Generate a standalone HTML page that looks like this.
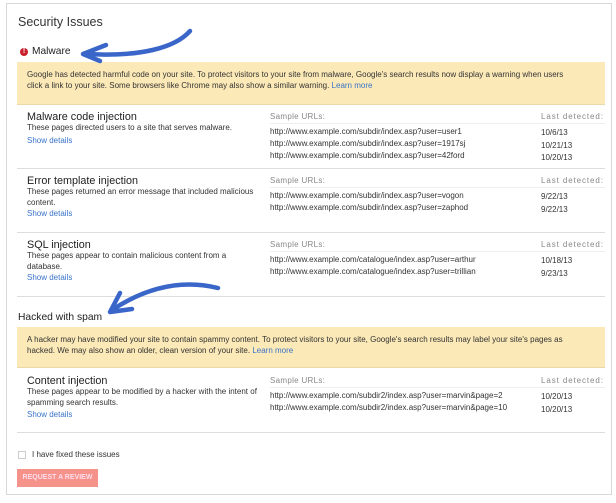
<!DOCTYPE html>
<html><head><meta charset="utf-8"><style>
*{margin:0;padding:0;box-sizing:border-box}
body{width:616px;height:503px;background:#fff;font-family:"Liberation Sans",Arial,sans-serif;color:#222;position:relative;overflow:hidden}
.a{position:absolute;white-space:nowrap}
.frame{position:absolute;left:6px;top:3px;width:606px;height:492px;border:1px solid #d8d8d8}
.yel{position:absolute;left:17px;width:588px;background:#fbe9b7;border-bottom:1px solid #e9d9a8}
.s{font-size:8px;line-height:10.5px;color:#333}
.h{font-size:10.8px;color:#222}
.l{font-size:8px;color:#3a73c8}
.g{font-size:8px;color:#888;letter-spacing:.3px}
.g2{font-size:8px;color:#888;letter-spacing:.9px}
.hr{position:absolute;left:17px;width:588px;height:1px;background:#ddd}
.hr2{position:absolute;left:270px;width:335px;height:1px;background:#eee}
</style></head><body>
<div class="frame"></div>
<div class="a" style="left:18px;top:15px;font-size:12.5px;color:#333">Security Issues</div>
<div class="a" style="left:20px;top:48px;width:8px;height:8px;border-radius:50%;background:#c8202a;color:#fff;font-size:7px;line-height:8px;text-align:center;font-weight:bold">!</div>
<div class="a" style="left:32px;top:46px;font-size:10.2px">Malware</div>
<div class="yel" style="top:62px;height:43px"></div>
<div class="a s" style="left:27px;top:70px">Google has detected harmful code on your site. To protect visitors to your site from malware, Google's search results now display a warning when users<br>click a link to your site. Some browsers like Chrome may also show a similar warning. <span style="color:#3a73c8">Learn more</span></div>

<div class="a h" style="left:27px;top:111px">Malware code injection</div>
<div class="a s" style="left:27px;top:123px">These pages directed users to a site that serves malware.</div>
<div class="a l" style="left:27px;top:136px">Show details</div>
<div class="a g" style="left:270px;top:112px">Sample URLs:</div>
<div class="a g2" style="left:541px;top:112px">Last detected:</div>
<div class="hr2" style="top:123px"></div>
<div class="a s" style="left:270px;top:126px;line-height:12px">http://www.example.com/subdir/index.asp?user=user1<br>http://www.example.com/subdir/index.asp?user=1917sj<br>http://www.example.com/subdir/index.asp?user=42ford</div>
<div class="a s" style="left:541px;top:127px;line-height:12.5px">10/6/13<br>10/21/13<br>10/20/13</div>
<div class="hr" style="top:168px"></div>

<div class="a h" style="left:27px;top:175px">Error template injection</div>
<div class="a s" style="left:27px;top:187px">These pages returned an error message that included malicious<br>content.</div>
<div class="a l" style="left:27px;top:209px">Show details</div>
<div class="a g" style="left:270px;top:176px">Sample URLs:</div>
<div class="a g2" style="left:541px;top:176px">Last detected:</div>
<div class="hr2" style="top:187px"></div>
<div class="a s" style="left:270px;top:190px;line-height:12px">http://www.example.com/subdir/index.asp?user=vogon<br>http://www.example.com/subdir/index.asp?user=zaphod</div>
<div class="a s" style="left:541px;top:191px;line-height:12.5px">9/22/13<br>9/22/13</div>
<div class="hr" style="top:232px"></div>

<div class="a h" style="left:27px;top:239px">SQL injection</div>
<div class="a s" style="left:27px;top:251px">These pages appear to contain malicious content from a<br>database.</div>
<div class="a l" style="left:27px;top:273px">Show details</div>
<div class="a g" style="left:270px;top:240px">Sample URLs:</div>
<div class="a g2" style="left:541px;top:240px">Last detected:</div>
<div class="hr2" style="top:251px"></div>
<div class="a s" style="left:270px;top:254px;line-height:12px">http://www.example.com/catalogue/index.asp?user=arthur<br>http://www.example.com/catalogue/index.asp?user=trillian</div>
<div class="a s" style="left:541px;top:255px;line-height:12.5px">10/18/13<br>9/23/13</div>
<div class="hr" style="top:296px"></div>

<div class="a" style="left:18px;top:312px;font-size:10.3px">Hacked with spam</div>
<div class="yel" style="top:327px;height:41px"></div>
<div class="a s" style="left:27px;top:335px">A hacker may have modified your site to contain spammy content. To protect visitors to your site, Google's search results may label your site's pages as<br>hacked. We may also show an older, clean version of your site. <span style="color:#3a73c8">Learn more</span></div>

<div class="a h" style="left:27px;top:375px">Content injection</div>
<div class="a s" style="left:27px;top:387px">These pages appear to be modified by a hacker with the intent of<br>spamming search results.</div>
<div class="a l" style="left:27px;top:410px">Show details</div>
<div class="a g" style="left:270px;top:376px">Sample URLs:</div>
<div class="a g2" style="left:541px;top:376px">Last detected:</div>
<div class="hr2" style="top:387px"></div>
<div class="a s" style="left:270px;top:390px;line-height:12px">http://www.example.com/subdir2/index.asp?user=marvin&amp;page=2<br>http://www.example.com/subdir2/index.asp?user=marvin&amp;page=10</div>
<div class="a s" style="left:541px;top:391px;line-height:12.5px">10/20/13<br>10/20/13</div>
<div class="hr" style="top:432px"></div>

<div class="a" style="left:18px;top:451px;width:8px;height:8px;border:1px solid #ccc"></div>
<div class="a s" style="left:32px;top:450px">I have fixed these issues</div>
<div class="a" style="left:17px;top:469px;width:81px;height:18px;background:#f5928a;color:#fde;font-size:7px;font-weight:bold;line-height:18px;text-align:center">REQUEST A REVIEW</div>

<svg class="a" style="left:0;top:0" width="616" height="503">
<g fill="none" stroke="#3a66c9" stroke-width="4.5" stroke-linecap="round" stroke-linejoin="round">
<path d="M190 31 C175 48 140 57 86 54"/>
<path d="M106 45 L83 54 L100 61"/>
<path d="M218 288 C185 280 150 285 112 310"/>
<path d="M120 293 L110 312 L132 309"/>
</g>
</svg>
</body></html>
